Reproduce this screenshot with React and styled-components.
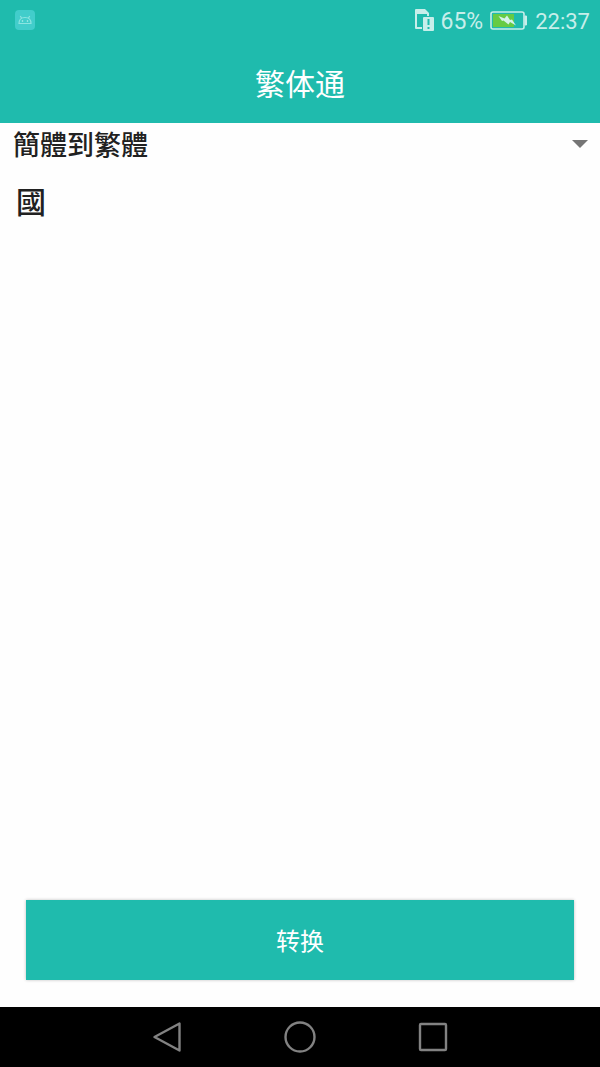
import React, { useState } from 'react';
import styled, { createGlobalStyle } from 'styled-components';

const GlobalStyle = createGlobalStyle`
* {
    box-sizing: border-box;
}
body {
    margin: 0;
    background-color: #FEFEFE;
    font-family: Roboto, 'Noto Sans CJK SC', sans-serif;
}
`
const Page = styled.div`
display: flex;
flex-direction: column;
min-height: 100vh;
`
const Header = styled.header`
background-color: #1FBBAD;
color: #FFFFFF;
`
const StatusBar = styled.div`
display: flex;
align-items: center;
justify-content: space-between;
height: 40px;
padding: 0 10px 0 15px;
`
const StatusRight = styled.div`
display: flex;
align-items: center;
gap: 7px;
color: #C7EEEA;
line-height: 40px;
`
const StatusText = styled.span`
padding-top: 3px;
font-size: ${({ $large }) => ($large ? '23px' : '22px')};
`
const Icon = styled.svg`
display: block;
flex: none;
`
const Title = styled.h1`
margin: 0;
padding: 23px 0 16px;
font-size: 30px;
font-weight: 400;
line-height: 44px;
text-align: center;
`
const Main = styled.main`
display: flex;
flex: 1;
flex-direction: column;
`
const Picker = styled.div`
position: relative;
display: flex;
`
const Select = styled.select`
appearance: none;
flex: 1;
height: 42px;
padding: 4px 40px 0 13px;
border: 0;
border-radius: 0;
outline: none;
background-color: transparent;
color: #212121;
font-family: Roboto, 'Noto Sans CJK TC', sans-serif;
font-size: 27px;
font-weight: 500;
line-height: 38px;
`
const Arrow = styled.svg`
position: absolute;
top: 17px;
right: 12px;
pointer-events: none;
`
const Input = styled.textarea`
flex: 1;
padding: 16px;
border: 0;
outline: none;
resize: none;
background-color: transparent;
color: #212121;
font-family: Roboto, 'Noto Sans CJK TC', sans-serif;
font-size: 30px;
font-weight: 500;
line-height: 44px;
`
const ConvertBtn = styled.button`
height: 80px;
margin: 26px;
margin-bottom: 27px;
padding: 4px 0 0;
border: 0;
background-color: #1FBBAD;
box-shadow: 0 0 3px rgba(0, 0, 0, 0.25);
color: #FFFFFF;
font-family: inherit;
font-size: 24px;
font-weight: 400;
line-height: 36px;
`
const NavBar = styled.nav`
display: flex;
align-items: center;
justify-content: center;
gap: 101px;
height: 60px;
background-color: #000000;
`
const NavBtn = styled.button`
padding: 0;
border: 0;
background: none;
color: #828282;
`

const AndroidIcon = () => (
    <Icon width="20" height="20" viewBox="0 0 20 20" fill="none">
        <rect width="20" height="20" rx="4" fill="#42CDCB" />
        <path d="M4 13.5c0-3 1.6-6 6-6s6 3 6 6zM6.5 8 5.3 6M13.5 8l1.2-2" stroke="#8CE4E1" strokeWidth="1.2" />
        <circle cx="7.5" cy="11" r="0.8" fill="#B8F0EE" />
        <circle cx="12.5" cy="11" r="0.8" fill="#B8F0EE" />
    </Icon>
)

const SimIcon = () => (
    <Icon width="19" height="22" viewBox="0 0 19 22">
        <path fill="#C7EEEA" fillRule="evenodd" d="M1 0h9l4 4v3h-2V5H2v13h5v2H1a1 1 0 0 1-1-1V1a1 1 0 0 1 1-1z" />
        <path fill="#C7EEEA" d="M9 8h9a1 1 0 0 1 1 1v12a1 1 0 0 1-1 1H9a1 1 0 0 1-1-1V9a1 1 0 0 1 1-1z" />
        <path fill="#1FBBAD" d="M12.5 10h2v6h-2zM12.5 18h2v2h-2z" />
    </Icon>
)

const BatteryIcon = () => (
    <Icon width="38" height="19" viewBox="0 0 38 19">
        <rect x="1" y="1" width="33" height="17" rx="2" fill="none" stroke="#C7EEEA" strokeWidth="1.6" />
        <path d="M35 5h1.5v9H35z" fill="#C7EEEA" stroke="#C7EEEA" />
        <rect x="3" y="3" width="21" height="13" fill="#66CB45" />
        <path d="m8.5 5 6 2.5 2.5-3 3 4.5 2-.5 4 6-6-3.5-1.5 2.5-5-4-1.5.5z" fill="#D5F3EA" />
    </Icon>
)

export default function App() {
    const [mode, setMode] = useState('s2t')
    const [text, setText] = useState('國')

    return (
        <>
            <GlobalStyle />
            <Page>
                <Header>
                    <StatusBar>
                        <AndroidIcon />
                        <StatusRight>
                            <SimIcon />
                            <StatusText $large>65%</StatusText>
                            <BatteryIcon />
                            <StatusText>22:37</StatusText>
                        </StatusRight>
                    </StatusBar>
                    <Title>繁体通</Title>
                </Header>
                <Main>
                    <Picker>
                        <Select aria-label="簡體到繁體" value={mode} onChange={(e) => setMode(e.target.value)}>
                            <option value="s2t">簡體到繁體</option>
                        </Select>
                        <Arrow width="16" height="8" viewBox="0 0 16 8">
                            <path d="M0 0h16L8 8z" fill="#757575" />
                        </Arrow>
                    </Picker>
                    <Input aria-label="國" value={text} onChange={(e) => setText(e.target.value)} />
                    <ConvertBtn type="button">转换</ConvertBtn>
                </Main>
                <NavBar>
                    <NavBtn type="button" aria-label="Back">
                        <Icon width="32" height="32" viewBox="0 0 32 32" fill="none" stroke="currentColor" strokeWidth="2.4" strokeLinejoin="round">
                            <path d="M28.5 2.5v27L3.5 16z" />
                        </Icon>
                    </NavBtn>
                    <NavBtn type="button" aria-label="Home">
                        <Icon width="32" height="32" viewBox="0 0 32 32" fill="none" stroke="currentColor" strokeWidth="2.4">
                            <circle cx="16" cy="16" r="14.5" />
                        </Icon>
                    </NavBtn>
                    <NavBtn type="button" aria-label="Recent">
                        <Icon width="32" height="32" viewBox="0 0 32 32" fill="none" stroke="currentColor" strokeWidth="2.4" strokeLinejoin="round">
                            <rect x="3" y="3" width="26" height="26" rx="1" />
                        </Icon>
                    </NavBtn>
                </NavBar>
            </Page>
        </>
    );
}
